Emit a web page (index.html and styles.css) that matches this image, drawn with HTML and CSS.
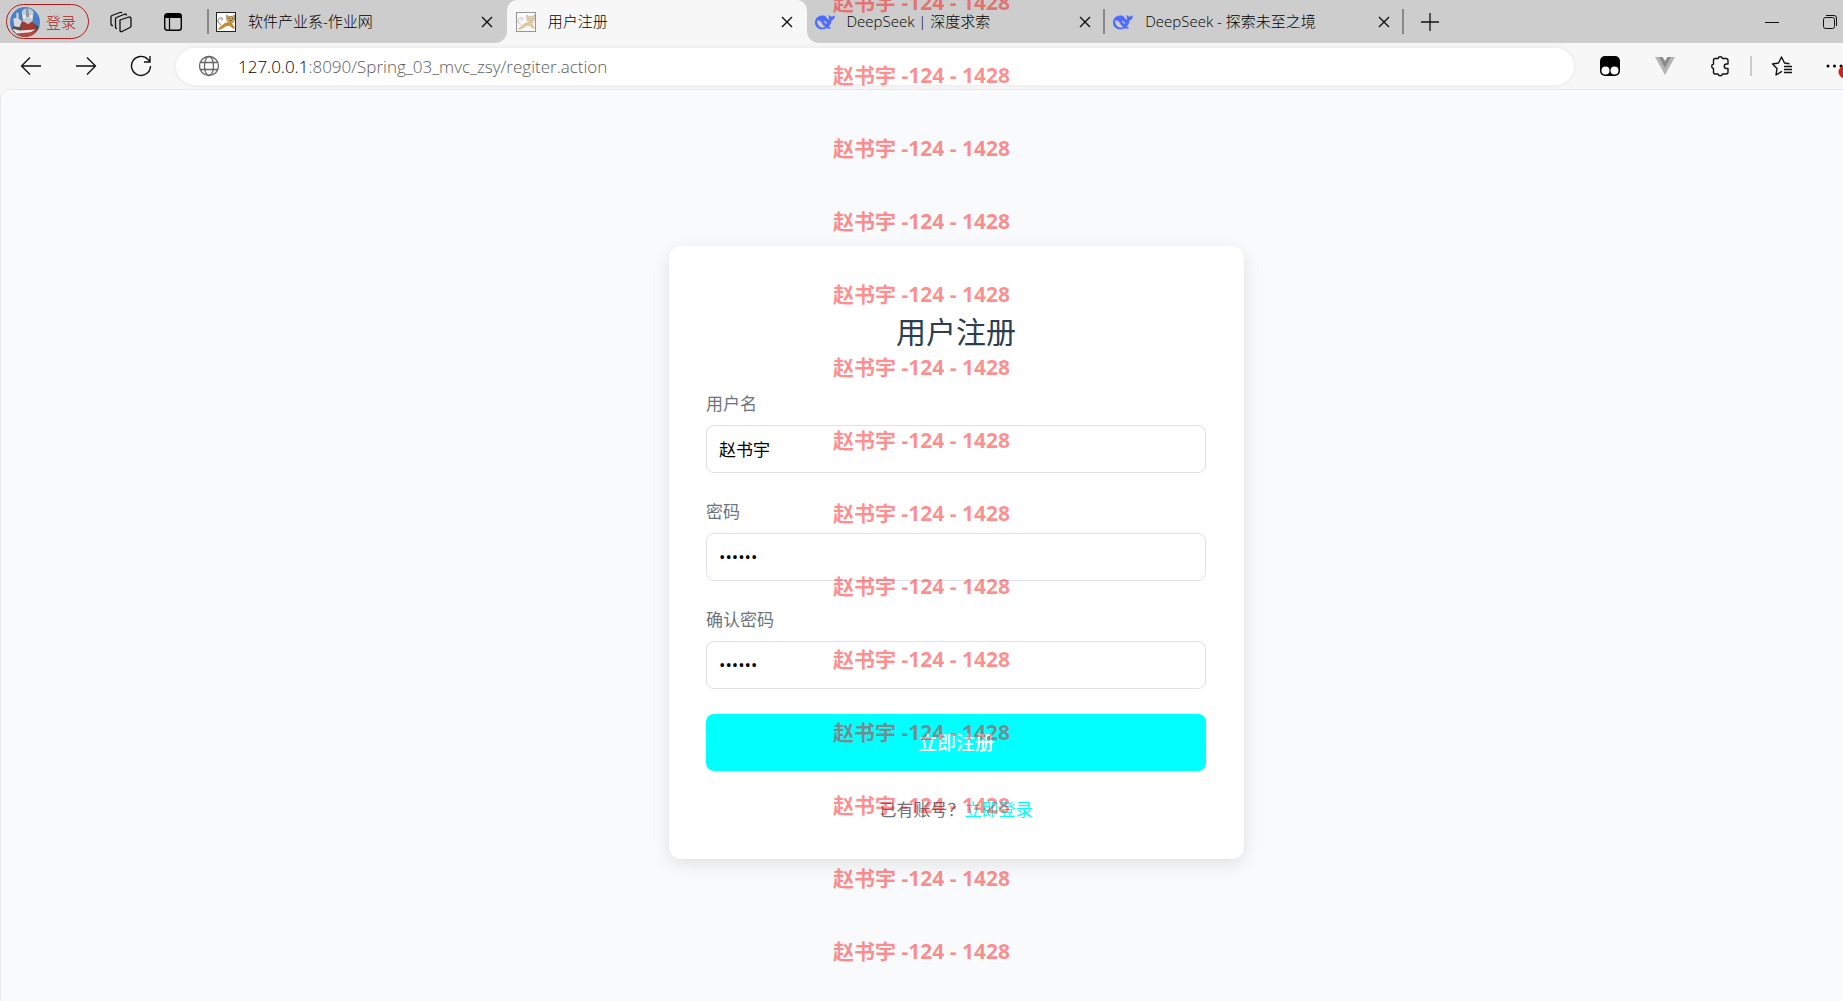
FILE: index.html
```html
<!DOCTYPE html>
<html lang="zh-CN">
<head>
<meta charset="UTF-8">
<meta name="viewport" content="width=device-width, initial-scale=1.0">
<title>用户注册</title>
<link rel="stylesheet" href="styles.css">
</head>
<body>
<!-- shared icons -->
<svg class="defs" width="0" height="0" aria-hidden="true">
  <symbol id="close" viewBox="0 0 12 12"><path d="M1 1l10 10M11 1L1 11" fill="none" stroke="#111" stroke-width="1.4"/></symbol>
  <symbol id="cat" viewBox="0 0 20 20">
    <rect x=".5" y=".5" width="19" height="19" fill="#fff" stroke="#222"/>
    <path d="M5 12.500C1 11.500 1 6 5 6c2 0 2 2 .5 2.500" fill="none" stroke="#555" stroke-width=".8"/>
    <path d="M10.500 3l2 1.500h3.500L18.500 3v5l-2 3h-3l-2.500-2.500z" fill="#d9a94e" stroke="#7a5a22" stroke-width=".6"/>
    <path d="M2 17l3-3 4-3 4-1 3 1.500L19 16l-2 .8-3.500-3-3 .2-4 2.500L3 18z" fill="#c98a2c"/>
    <path d="M12.500 6.500h1.200M15.800 6.500H17M14 8.500h1.500" stroke="#222" stroke-width=".9"/>
  </symbol>
  <symbol id="whale" viewBox="0 0 20 16">
    <path d="M0 8.500C0 4 3.500 1.500 8 1.500c2 0 2.500.8 3.500 2s1.500 2 2.500 2.500c.8-.8-.8-3-.5-5.500C14.500 2 15.500 2.500 16.500 2.500S19 2 20 1.500c-.3 3-1.500 4.500-3.500 5-.3 2.500-1.200 4.500-2.700 6 .7.800 1.700 1.200 2.700 1.500-1.500 1-3.200.8-4.500.2C6.500 17 0 14.500 0 8.500z" fill="#4d6bfe"/>
    <path d="M2 6.500c2.500-.5 4 .8 5.200 3s2 3 3.300 3.500C6 15 2 11.500 2 6.500z" fill="#cdcdcd"/>
    <path d="M8.500 7c2-.5 3.500 1 3.500 3-1-.3-2.500-1.200-3.500-3z" fill="#cdcdcd"/>
  </symbol>
</svg>

<header class="browser">
  <div class="tabbar">
    <button class="profile">
      <svg class="avatar" viewBox="0 0 28 28" aria-hidden="true">
        <clipPath id="round"><circle cx="14" cy="14" r="14"/></clipPath>
        <g clip-path="url(#round)">
          <rect width="28" height="28" fill="#4a80c8"/>
          <path d="M1 20l7-5 12-1 8 5v9H0z" fill="#5b4a50"/>
          <path d="M11 14h10l4 8-5 4-9-2z" fill="#a33a31"/>
          <path d="M11 5c1-5 9-5 11 0l-1 8-4 3-5-3z" fill="#c5cbd2"/>
          <path d="M15 1h2l1 8h-3z" fill="#8d959f"/>
          <path d="M12 7l3 1-1 3-2-1zM21 7l-3 1 1 3 2-1z" fill="#f3efe0"/>
          <path d="M3 11l3-1V5l2 1v5l3 2-2 6-5-1z" fill="#d5d9dd"/>
          <path d="M2 20l7 2 15-1-9 5-9-1z" fill="#e4e6e8"/>
          <path d="M4 25l20-2-3 5H8z" fill="#b64a3c"/>
        </g>
      </svg>
      <span>登录</span>
    </button>
    <button class="bar-btn" aria-label="工作区">
      <svg width="22" height="22" viewBox="0 0 22 22" fill="none" stroke="#111" stroke-width="1.300" stroke-linejoin="round">
        <path d="M10 9l9-3q2 0 2 1.500V15q0 1-1 1.500l-8 4q-2 .5-2-1z"/>
        <path d="M7 17.500q-1.500 0-1.500-1.500V8q0-1 1-1.500L15 3q1.500 0 1.500 1.500"/>
        <path d="M3 14.500q-2 0-2-1.500V6q0-1 1-1.500l8-3q1.500-.5 2 .5"/>
      </svg>
    </button>
    <button class="bar-btn" aria-label="标签页操作">
      <svg width="18" height="18" viewBox="0 0 18 18">
        <rect x=".7" y=".7" width="16.600" height="16.600" rx="2.500" fill="none" stroke="#000" stroke-width="1.400"/>
        <path d="M1 5V3q0-2 2-2h12q2 0 2 2v2z"/>
        <path d="M5.500 5v12" stroke="#000" stroke-width="1.200"/>
      </svg>
    </button>
    <nav class="tabs" aria-label="标签页">
      <div class="tab first">
        <svg class="favicon"><use href="#cat"/></svg>
        <span class="tab-name">软件产业系-作业网</span>
        <button class="tab-close" aria-label="关闭"><svg width="12" height="12"><use href="#close"/></svg></button>
      </div>
      <div class="tab active">
        <svg class="favicon faded"><use href="#cat"/></svg>
        <span class="tab-name">用户注册</span>
        <button class="tab-close" aria-label="关闭"><svg width="12" height="12"><use href="#close"/></svg></button>
      </div>
      <div class="tab">
        <svg class="favicon"><use href="#whale"/></svg>
        <span class="tab-name">DeepSeek | 深度求索</span>
        <button class="tab-close" aria-label="关闭"><svg width="12" height="12"><use href="#close"/></svg></button>
      </div>
      <div class="tab">
        <svg class="favicon"><use href="#whale"/></svg>
        <span class="tab-name">DeepSeek - 探索未至之境</span>
        <button class="tab-close" aria-label="关闭"><svg width="12" height="12"><use href="#close"/></svg></button>
      </div>
    </nav>
    <button class="bar-btn new-tab" aria-label="新建标签页">
      <svg width="18" height="18"><path d="M9 0v18M0 9h18" stroke="#111" stroke-width="1.300"/></svg>
    </button>
    <div class="win-btns">
      <button class="bar-btn" aria-label="最小化"><svg width="14" height="14"><path d="M0 7.500h14" stroke="#111"/></svg></button>
      <button class="bar-btn" aria-label="还原">
        <svg width="14" height="14" fill="none" stroke="#111"><rect x=".5" y="2.500" width="11" height="11" rx="2"/><path d="M3 .5h8q2.500 0 2.500 2.500v8"/></svg>
      </button>
    </div>
  </div>

  <div class="toolbar">
    <div class="nav-btns">
      <button class="bar-btn" aria-label="后退"><svg width="22" height="20" fill="none" stroke="#111" stroke-width="1.300"><path d="M21 10H2M10 1.500L1.500 10l8.500 8.500"/></svg></button>
      <button class="bar-btn" aria-label="前进"><svg width="22" height="20" fill="none" stroke="#111" stroke-width="1.300"><path d="M1 10h19M12 1.500L20.500 10 12 18.500"/></svg></button>
      <button class="bar-btn" aria-label="刷新"><svg width="22" height="22" fill="none" stroke="#111" stroke-width="1.400"><path d="M20.500 11A9.500 9.500 0 1 1 18 4.500l2 2M20 1v6h-6"/></svg></button>
    </div>
    <div class="address">
      <svg width="22" height="22" viewBox="0 0 22 22" fill="none" stroke="#666" stroke-width="1.300" aria-hidden="true">
        <circle cx="11" cy="11" r="9.500"/><ellipse cx="11" cy="11" rx="4.500" ry="9.500"/><path d="M2.500 7.500h17M2.500 14.500h17"/>
      </svg>
      <a class="url" href="#"><b>127.0.0.1</b>:8090/Spring_03_mvc_zsy/regiter.action</a>
    </div>
    <div class="tools">
      <button class="bar-btn" aria-label="篡改猴">
        <svg width="20" height="20"><rect width="20" height="20" rx="5"/><circle cx="5.500" cy="14.500" r="4" fill="#fff"/><circle cx="14.500" cy="14.500" r="4" fill="#fff"/></svg>
      </button>
      <button class="bar-btn" aria-label="Vue">
        <svg width="20" height="18"><path d="M0 0h20L10 18z" fill="#b5b5b5"/><path d="M4 0h12l-6 11z" fill="#8a8a8a"/><path d="M7.500 0h5L10 4z" fill="#f7f7f7"/></svg>
      </button>
      <button class="bar-btn" aria-label="扩展">
        <svg width="20" height="22" viewBox="0 0 20 22" fill="none" stroke="#111" stroke-width="1.400" stroke-linejoin="round"><path d="M5 3.500h3a2.300 2.300 0 0 1 4.500 0H16q2 0 2 2V9h-1.500a2.200 2.200 0 0 0 0 4.500H18V17q0 2-2 2h-3.500a2.300 2.300 0 0 1-4.500 0H5q-1.500 0-1.500-2v-3.500a2.300 2.300 0 0 1 0-4.500V5.500q0-2 1.500-2z"/></svg>
      </button>
      <i class="split"></i>
      <button class="bar-btn" aria-label="收藏夹">
        <svg width="22" height="20" fill="none" stroke="#111" stroke-width="1.400" stroke-linejoin="round"><path d="M11 16l-.5-.3L5 19l1-6.500L1.500 8l6-1 3-6 3 6 5 .8M13 10.500h8M13 13.500h8M13 16.500h8"/></svg>
      </button>
      <button class="bar-btn more" aria-label="设置及其他">
        <svg width="24" height="24"><circle cx="3" cy="12" r="1.500"/><circle cx="9.500" cy="12" r="1.500"/><circle cx="16" cy="12" r="1.500"/><circle cx="20" cy="18" r="6.500" fill="#c42b1c"/></svg>
      </button>
    </div>
  </div>
</header>

<main class="page">
  <form class="card">
    <h2>用户注册</h2>
    <div class="form-group">
      <label for="username">用户名</label>
      <input type="text" id="username" value="赵书宇">
    </div>
    <div class="form-group">
      <label for="password">密码</label>
      <input type="password" id="password" value="123456">
    </div>
    <div class="form-group">
      <label for="confirm">确认密码</label>
      <input type="password" id="confirm" value="123456">
    </div>
    <button type="button" class="submit">立即注册</button>
    <p class="login-link">已有账号？<a href="#">立即登录</a></p>
  </form>
</main>

<!-- watermark over everything -->
<div class="watermark">
  <span>赵书宇 -124 - 1428</span>
  <span>赵书宇 -124 - 1428</span>
  <span>赵书宇 -124 - 1428</span>
  <span>赵书宇 -124 - 1428</span>
  <span>赵书宇 -124 - 1428</span>
  <span>赵书宇 -124 - 1428</span>
  <span>赵书宇 -124 - 1428</span>
  <span>赵书宇 -124 - 1428</span>
  <span>赵书宇 -124 - 1428</span>
  <span>赵书宇 -124 - 1428</span>
  <span>赵书宇 -124 - 1428</span>
  <span>赵书宇 -124 - 1428</span>
  <span>赵书宇 -124 - 1428</span>
  <span>赵书宇 -124 - 1428</span>
</div>
</body>
</html>
```
FILE: styles.css
```css
* {
    box-sizing: border-box;
}

body {
    margin: 0;
    height: 100vh;
    display: flex;
    flex-direction: column;
    overflow: hidden;
    background-color: #f7f7f7;
    font-family: "Open Sans", "Noto Sans CJK SC", sans-serif;
}

button {
    font-family: inherit;
    border: none;
    background: none;
    padding: 0;
}

svg {
    display: block;
}

.defs {
    position: absolute;
}

/* Tab strip */
.tabbar {
    display: flex;
    align-items: center;
    height: 43px;
    padding-left: 6px;
    background-color: #cdcdcd;
}

.profile {
    display: flex;
    align-items: center;
    gap: 6px;
    width: 83px;
    height: 35px;
    padding: 0 3px;
    margin-right: 19px;
    border: 1px solid #b01c1c;
    border-radius: 18px;
    color: #b01c1c;
    font-size: 15px;
    font-weight: 300;
    line-height: 20px;
}

.avatar {
    width: 30px;
    height: 30px;
}

.bar-btn {
    display: flex;
    align-items: center;
    justify-content: center;
    flex: none;
    width: 26px;
    height: 26px;
}

.bar-btn + .bar-btn {
    margin-left: 26px;
}

.tabs {
    display: flex;
    align-self: stretch;
    flex: 0 1 1197px;
    margin-left: 21px;
    background: linear-gradient(#cdcdcd 50%, #f7f7f7 50%);
}

.tab {
    display: flex;
    align-items: center;
    flex: 1;
    padding: 0 12px 0 8px;
    font-size: 15px;
    font-weight: 300;
    color: #000;
    background: linear-gradient(#888, #888) right center / 2px 25px no-repeat #cdcdcd;
}

.tab.first {
    padding-left: 9px;
    background: linear-gradient(#888, #888) left center / 2px 25px no-repeat #cdcdcd;
    border-bottom-right-radius: 12px;
}

.tab.active {
    padding-left: 9px;
    background: #f7f7f7;
    border-radius: 10px 10px 0 0;
}

.tab.active + .tab {
    border-bottom-left-radius: 12px;
}

.favicon {
    flex: none;
    width: 20px;
    height: 20px;
    margin-right: 12px;
}

.faded {
    opacity: .45;
}

.tab-name {
    flex: 1;
    padding-bottom: 2px;
    white-space: nowrap;
    line-height: 20px;
}

.tab-close {
    padding: 4px 2px;
}

.new-tab {
    margin-left: 13px;
}

.win-btns {
    display: flex;
    margin-left: auto;
}

.win-btns .bar-btn + .bar-btn {
    margin-left: 32px;
}

/* Address row */
.toolbar {
    display: flex;
    align-items: center;
    height: 46px;
    background-color: #f7f7f7;
}

.nav-btns {
    display: flex;
    width: 176px;
    padding-left: 18px;
}

.nav-btns .bar-btn + .bar-btn {
    margin-left: 29px;
}

.address {
    display: flex;
    align-items: center;
    flex: 1;
    gap: 18px;
    height: 37px;
    padding-left: 22px;
    border-radius: 19px;
    background-color: #fff;
    box-shadow: 0 0 5px rgba(0, 0, 0, .08);
}

.url {
    color: #5c5c5c;
    font-size: 17px;
    font-weight: 300;
    text-decoration: none;
}

.url b {
    color: #000;
    font-weight: 300;
}

.tools {
    display: flex;
    align-items: center;
    width: 269px;
    padding-left: 23px;
}

.tools .bar-btn + .bar-btn {
    margin-left: 29px;
}

.split {
    flex: none;
    width: 2px;
    height: 20px;
    margin: 0 17px;
    background-color: #ccc;
}

/* Page, runs a little past the right and bottom edges */
.page {
    display: flex;
    align-items: center;
    justify-content: center;
    flex: none;
    width: calc(100% + 70px);
    height: calc(100vh - 75px);
    border: 1px solid #e8e8e8;
    border-radius: 10px;
    background-color: #f8fafc;
}

.card {
    width: 575px;
    padding: 62px 38px 36px 37px;
    border-radius: 12px;
    background-color: #fff;
    box-shadow: 0 5px 18px rgba(0, 0, 0, .1);
}

.card h2 {
    margin: 0 0 34px;
    color: #2c3e50;
    font-size: 30px;
    line-height: 48px;
    font-weight: 400;
    text-align: center;
}

.form-group {
    margin-bottom: 25px;
}

.form-group label {
    display: block;
    margin-bottom: 8px;
    color: #6c757d;
    font-size: 17px;
    line-height: 27px;
}

.form-group input {
    display: block;
    width: 100%;
    height: 48px;
    padding: 0 12px;
    border: 1px solid #dee2e6;
    border-radius: 8px;
    background-color: #fff;
    color: #000;
    font-family: inherit;
    font-size: 17px;
}

.submit {
    width: 100%;
    height: 57px;
    border-radius: 8px;
    background-color: #00ffff;
    color: #fff;
    font-size: 19px;
    font-weight: 500;
}

.login-link {
    margin: 25px 0 0;
    color: #6c757d;
    font-size: 17px;
    line-height: 27px;
    text-align: center;
}

.login-link a {
    color: #00ffff;
    text-decoration: none;
}

.watermark {
    position: absolute;
    top: -34px;
    left: 0;
    right: 0;
    height: 1035px;
    overflow: hidden;
    text-align: center;
    pointer-events: none;
    color: rgba(255, 0, 0, .45);
    font-size: 21px;
    font-weight: 700;
    line-height: 73px;
}

.watermark span {
    display: block;
}
```
